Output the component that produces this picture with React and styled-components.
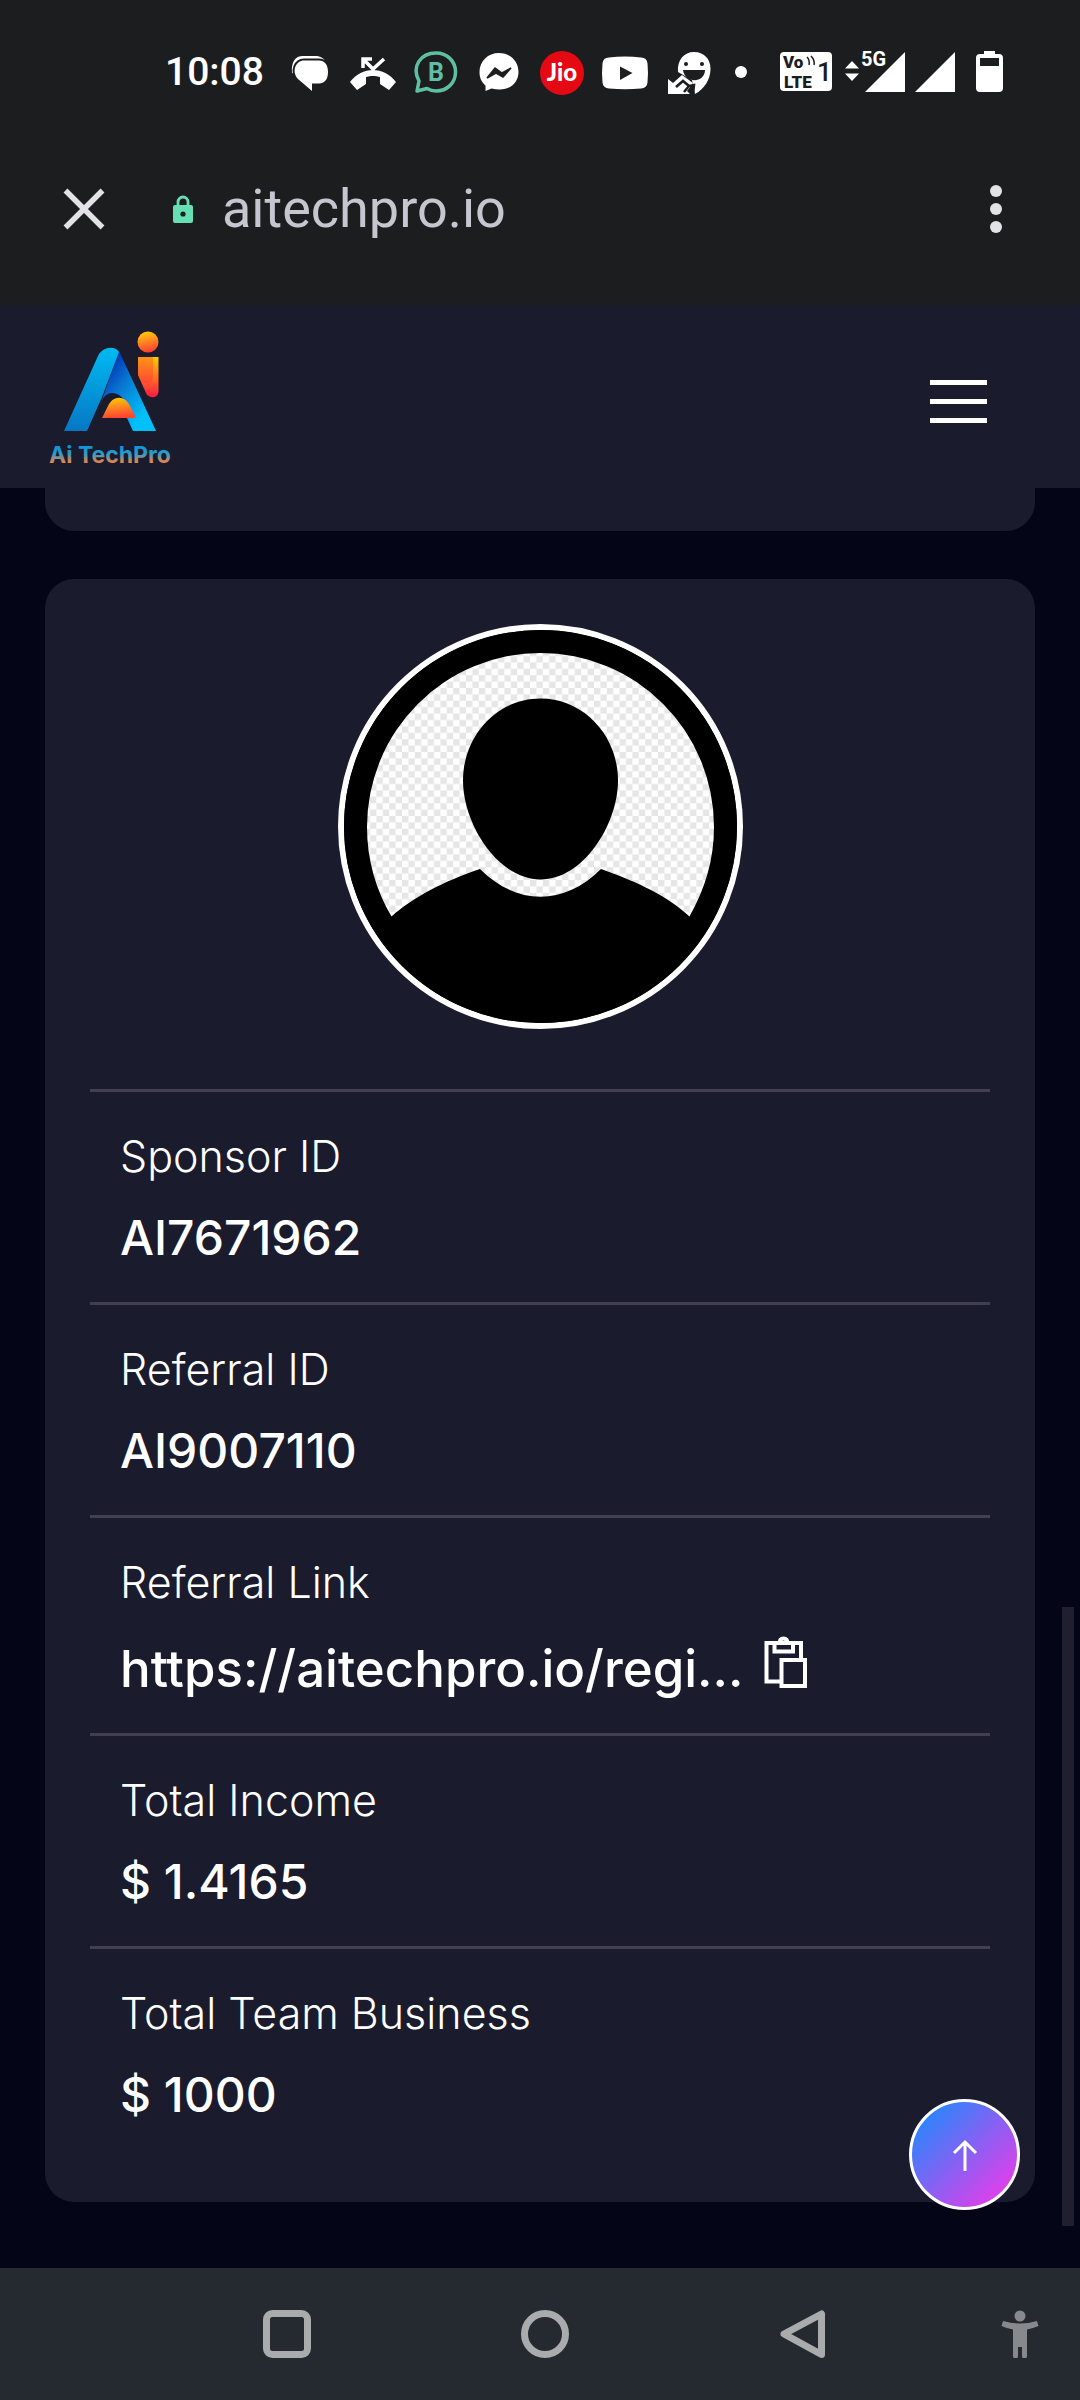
import React from "react";
import styled, { createGlobalStyle } from "styled-components";

const GlobalStyle = createGlobalStyle`
  *, *::before, *::after { box-sizing: border-box; }
  body {
    margin: 0;
    background: #040517;
    color: #fff;
    font-family: Inter, "Open Sans", sans-serif;
  }
  button { padding: 0; border: 0; background: none; color: inherit; cursor: pointer; }
  svg { display: block; flex: none; }
  dl, dt, dd { margin: 0; }
`;

const Screen = styled.div`
  display: flex;
  flex-direction: column;
  min-height: 100vh;
`;

const StatusBar = styled.div`
  display: flex;
  align-items: center;
  justify-content: space-between;
  height: 144px;
  padding: 0 77px 0 165px;
  background: #1c1d1f;
  font-family: Roboto, sans-serif;
`;

const StatusGroup = styled.div`
  display: flex;
  align-items: center;
  gap: ${(p) => p.$gap}px;
`;

const Clock = styled.time`
  width: 106px;
  font-size: 39px;
  font-weight: 500;
  line-height: 48px;
`;

const BrowserBar = styled.div`
  display: flex;
  align-items: center;
  height: 161px;
  padding: 0 72px 31px 57px;
  background: #1c1d1f;
  font-family: Roboto, sans-serif;
`;

const IconButton = styled.button`
  display: flex;
  align-items: center;
  justify-content: center;
  width: ${(p) => p.$width}px;
  height: 54px;
`;

const Address = styled.div`
  display: flex;
  flex: 1;
  align-items: center;
  gap: 28px;
  margin-left: 61px;
  color: #c4c6d0;
  font-size: 54px;
  line-height: 64px;
`;

const SiteHeader = styled.header`
  display: flex;
  align-items: center;
  justify-content: space-between;
  height: 183px;
  padding: 0 93px 0 48px;
  background: #1a1b2d;
`;

const MenuButton = styled.button`
  display: flex;
  flex-direction: column;
  gap: 14px;
  width: 57px;
  margin-top: 10px;
`;

const MenuBar = styled.span`
  width: 100%;
  height: 5px;
  background: #fff;
`;

const Main = styled.main`
  position: relative;
  flex: 1;
  display: flex;
  flex-direction: column;
  gap: 48px;
  padding: 0 45px 66px;
`;

const PreviousCard = styled.section`
  height: 43px;
  border-radius: 0 0 29px 29px;
  background: #1a1b2d;
`;

const ProfileCard = styled.section`
  display: flex;
  flex-direction: column;
  gap: 60px;
  padding: 45px 45px 43px;
  border-radius: 29px;
  background: #1a1b2d;
`;

const Avatar = styled.div`
  align-self: center;
  width: 405px;
  height: 405px;
  border: 6px solid #fff;
  border-radius: 50%;
  background: #000;
  overflow: hidden;
`;

const Details = styled.dl`
  display: flex;
  flex-direction: column;
`;

const DetailRow = styled.div`
  display: flex;
  flex-direction: column;
  gap: 14px;
  padding: 32px 30px 28px;
  border-top: 3px solid #413f50;
`;

const DetailLabel = styled.dt`
  font-size: 43px;
  font-weight: 300;
  line-height: 64px;
`;

const DetailValue = styled.dd`
  display: flex;
  align-items: flex-end;
  gap: 20px;
  font-size: ${(p) => (p.$link ? 51 : 48)}px;
  font-weight: 500;
  line-height: 72px;
`;

const CopyButton = styled.button`
  display: flex;
  align-items: center;
  height: 77px;
  padding-bottom: 7px;
`;

const TopButton = styled.button`
  position: absolute;
  right: 60px;
  bottom: 58px;
  display: flex;
  align-items: center;
  justify-content: center;
  width: 111px;
  height: 111px;
  border: 3px solid #fff;
  border-radius: 50%;
  background: linear-gradient(135deg, #0d90ff 0%, #ff33e7 100%);
`;

const ScrollThumb = styled.div`
  position: absolute;
  right: 6px;
  bottom: 42px;
  width: 12px;
  height: 619px;
  background: #1f1f30;
`;

const SystemNav = styled.nav`
  display: grid;
  grid-template-columns: 158fr 258fr 258fr 258fr 148fr;
  align-items: center;
  height: 132px;
  background: #252930;
`;

const NavButton = styled.button`
  display: flex;
  grid-column: ${(p) => p.$column};
  justify-content: ${(p) => (p.$end ? "flex-end" : "center")};
  padding-right: ${(p) => (p.$end ? 36 : 0)}px;
`;

const statusIcons = [
  <svg key="messages" width="48" height="48" viewBox="0 0 48 48" fill="#fff">
    <path d="M6 25C5 14 9 8 17 8h12c5 0 8 1.500 10 5L12 27z" />
    <path d="M18 12.500h15c5.500 0 9 4 9 11.500s-3.500 11.500-9 11.500h-7V43L12 31C5 23 10 12.500 18 12.500z" stroke="#1c1d1f" strokeWidth="4" paintOrder="stroke" />
  </svg>,
  <svg key="missed" width="48" height="48" viewBox="0 0 48 48">
    <path d="M1 34c12-16 34-16 46 0l-7 8-9-6v-7c-4-1.500-10-1.500-14 0v7l-9 6z" fill="#fff" />
    <path d="M14 20V11h9M15 12l9 9 11-10" fill="none" stroke="#fff" strokeWidth="3.500" />
  </svg>,
  <svg key="business" width="48" height="48" viewBox="0 0 48 48">
    <path d="M5 43l2-10C-1 18 9 5 24 5c11 0 19.500 8 19.500 19S35 43 24 43c-3 0-6-.8-9-2.500z" fill="none" stroke="#5fbfa3" strokeWidth="3.500" strokeLinejoin="round" />
    <text x="24" y="33" textAnchor="middle" fontFamily="Roboto" fontWeight="700" fontSize="25" fill="#5fbfa3">B</text>
  </svg>,
  <svg key="messenger" width="48" height="48" viewBox="0 0 48 48">
    <path d="M24 5C13 5 4.500 13 4.500 24c0 6 2 10 6 13.500V43l6-2.500C34 45 43.500 35 43.500 24S35 5 24 5z" fill="#fff" />
    <path d="M12 30l8-10 7 5 9-5-8 9-7-4z" fill="#1c1d1f" stroke="#1c1d1f" strokeWidth="1.500" />
  </svg>,
  <svg key="jio" width="48" height="48" viewBox="0 0 48 48">
    <circle cx="24" cy="25" r="22" fill="#e50914" />
    <text x="24" y="33" textAnchor="middle" fontFamily="Lato" fontWeight="900" fontSize="24" fill="#fff">Jio</text>
  </svg>,
  <svg key="video" width="48" height="48" viewBox="0 0 48 48">
    <path d="M8 9.500q16-2 32 0 6 0 6.500 6 1 9.500 0 19-.5 5.500-6.500 6-16 1.500-32 0-6-.5-6.500-6-1-9.500 0-19 .5-6 6.500-6z" fill="#fff" />
    <path d="M19 18.500v13.500l12.500-7z" fill="#1c1d1f" />
  </svg>,
  <svg key="face" width="48" height="48" viewBox="0 0 48 48">
    <path d="M30 4c10 0 16.500 7 16.500 16.500C46.500 32 40 41 31 46l-3-14-14-8c-1-12 6-20 16-20z" fill="#fff" />
    <circle cx="22" cy="16" r="2" fill="#1c1d1f" />
    <circle cx="38" cy="16" r="2" fill="#1c1d1f" />
    <path d="M19 22h22c0 13-20 14-22 0z" fill="#1c1d1f" />
    <path d="M4 31l5 4 9-8 11 8-6 8 3 3H4z" fill="#fff" />
    <path d="M12 39l7-6 6 5-5 6M25 38l5-1-1 9" fill="none" stroke="#1c1d1f" strokeWidth="2.500" />
  </svg>,
  <svg key="dot" width="28" height="48" viewBox="0 0 28 48">
    <circle cx="14" cy="24" r="6" fill="#fff" />
  </svg>,
];

function Volte() {
  return (
    <svg width="52" height="44" viewBox="0 -2 52 44">
      <rect width="52" height="39" rx="4" fill="#fff" />
      <g fill="#1c1d1f" fontFamily="Roboto" fontWeight="900">
        <text x="3" y="16" fontSize="17">Vo</text>
        <text x="4" y="36" fontSize="17">LTE</text>
        <text x="37" y="29" fontSize="26" fontWeight="500">1</text>
      </g>
      <path d="M27 5q3 3 2 8M31 4q4 4 3 9" fill="none" stroke="#1c1d1f" strokeWidth="1.500" />
    </svg>
  );
}

function MobileData() {
  return (
    <svg width="60" height="54" viewBox="0 -6 60 54" fill="#fff">
      <path d="M0 17.500l7-7.500 7 7.500zM0 22.500l7 7.500 7-7.500zM20 41L60 1v40z" />
      <text x="16" y="15" fontFamily="Roboto" fontWeight="700" fontSize="20">5G</text>
    </svg>
  );
}

function Signal() {
  return (
    <svg width="40" height="42" viewBox="0 0 40 42">
      <path d="M0 41L40 1v40z" fill="#fff" />
    </svg>
  );
}

function Battery() {
  return (
    <svg width="27" height="42" viewBox="0 0 27 42">
      <path d="M8 0h11v3h4q4 0 4 4v30q0 4-4 4H4q-4 0-4-4V7q0-4 4-4h4z" fill="#fff" />
      <path d="M4 7h19v8H4z" fill="#1c1d1f" />
    </svg>
  );
}

function Logo() {
  return (
    <svg width="126" height="146" viewBox="48 23 126 146" role="img" aria-label="Ai TechPro">
      <defs>
        <linearGradient id="legLeft" x1="0" y1="0" x2="0" y2="1">
          <stop offset="0" stopColor="#00baf2" />
          <stop offset="1" stopColor="#0677c4" />
        </linearGradient>
        <linearGradient id="legRight" x1=".1" y1=".15" x2=".7" y2=".85">
          <stop offset="0" stopColor="#0030b4" />
          <stop offset=".4" stopColor="#0874d0" />
          <stop offset="1" stopColor="#00c0fa" />
        </linearGradient>
        <linearGradient id="warm" x1="0" y1="0" x2=".2" y2="1">
          <stop offset="0" stopColor="#ffd500" />
          <stop offset=".5" stopColor="#ff8b1f" />
          <stop offset="1" stopColor="#ff4630" />
        </linearGradient>
        <linearGradient id="stem" x1="0" y1="0" x2="0" y2="1">
          <stop offset="0" stopColor="#ffce00" />
          <stop offset="1" stopColor="#ff1744" />
        </linearGradient>
        <linearGradient id="word" x1="0" y1="0" x2="0" y2="1">
          <stop offset=".2" stopColor="#0c96dc" />
          <stop offset=".45" stopColor="#2a9ccb" />
          <stop offset=".75" stopColor="#e9824b" />
        </linearGradient>
      </defs>
      <path d="M119 50l37 80h-23l-6-13 8-1c-8-14-13-24-23-24q-6 0-10 7z" fill="url(#legRight)" />
      <path d="M64 130l34-75c4-9 17-11 21-4l-17 45-15 34z" fill="url(#legLeft)" />
      <path d="M102 117l6-12c5-11 17-11 22 0l6 12z" fill="url(#warm)" />
      <circle cx="148" cy="41" r="10.500" fill="url(#warm)" />
      <path d="M138 56h20.500v34c0 7-9 9-12.500 2l-8-18z" fill="url(#stem)" />
      <path d="M138 56h15v19c0 7-7 9-11 6l-4-7z" fill="#ff2b3d" opacity=".35" />
      <text x="49" y="162" fontFamily="Inter, sans-serif" fontWeight="700" fontSize="23" fill="url(#word)">Ai TechPro</text>
    </svg>
  );
}

function Portrait() {
  return (
    <svg width="393" height="393" viewBox="6 6 393 393" role="img" aria-label="Profile">
      <defs>
        <pattern id="checks" width="12.800" height="12.800" patternUnits="userSpaceOnUse">
          <rect width="12.800" height="12.800" fill="#fff" />
          <path d="M0 0h6.400v6.400H0zM6.400 6.400h6.400v6.400H6.400z" fill="#e6e6e6" />
        </pattern>
      </defs>
      <rect x="6" y="6" width="393" height="393" fill="#000" />
      <path d="M53.500 292.500C38 266 29 236 29 203a173.500 174 0 0 1 347 0c0 33-9 62-24.500 89.500C331 273 300 258 263 245c-37 37-84 37-121 0-36 12-68 29-88.500 47.500z" fill="url(#checks)" />
      <path d="M202.500 74.500c43 0 77.500 37 77.500 82 0 44-35 99-77.500 99S125 200.500 125 156.500c0-45 34.500-82 77.500-82z" fill="#000" />
    </svg>
  );
}

function Clipboard() {
  return (
    <svg width="46" height="54" viewBox="0 0 46 54" fill="none" stroke="#fff" strokeWidth="4">
      <path d="M18 45.500H3.500V7H38v17" />
      <path d="M11.500 7v8.500H30V7" />
      <path d="M16.500 7.500q0-5 4-5t4 5" />
      <rect x="18.500" y="24" width="23.500" height="26" />
    </svg>
  );
}

const details = [
  { label: "Sponsor ID", value: "AI7671962" },
  { label: "Referral ID", value: "AI9007110" },
  { label: "Referral Link", value: "https://aitechpro.io/regi...", copy: true },
  { label: "Total Income", value: "$ 1.4165" },
  { label: "Total Team Business", value: "$ 1000" },
];

export default function App() {
  return (
    <Screen>
      <GlobalStyle />
      <StatusBar>
        <StatusGroup $gap={15}>
          <Clock>10:08</Clock>
          {statusIcons}
        </StatusGroup>
        <StatusGroup $gap={10}>
          <StatusGroup $gap={13}>
            <Volte />
            <MobileData />
          </StatusGroup>
          <StatusGroup $gap={21}>
            <Signal />
            <Battery />
          </StatusGroup>
        </StatusGroup>
      </StatusBar>
      <BrowserBar>
        <IconButton $width={54} aria-label="Close">
          <svg width="42" height="42" viewBox="0 0 42 42" stroke="#e3e2e6" strokeWidth="5.500">
            <path d="M2.500 2.500l37 37M39.500 2.500l-37 37" />
          </svg>
        </IconButton>
        <Address>
          <svg width="22" height="30" viewBox="0 0 22 30">
            <path d="M6 12V8a5 5 0 0 1 10 0v4" fill="none" stroke="#66dfb3" strokeWidth="2.800" />
            <rect x="1" y="11" width="20" height="18" rx="2" fill="#66dfb3" />
            <circle cx="11" cy="20" r="2.600" fill="#1c1d1f" />
          </svg>
          <span>aitechpro.io</span>
        </Address>
        <IconButton $width={24} aria-label="More options">
          <svg width="12" height="48" viewBox="0 0 12 48" fill="#e3e2e6">
            <circle cx="6" cy="6" r="6" />
            <circle cx="6" cy="24" r="6" />
            <circle cx="6" cy="42" r="6" />
          </svg>
        </IconButton>
      </BrowserBar>
      <SiteHeader>
        <Logo />
        <MenuButton aria-label="Open menu">
          <MenuBar />
          <MenuBar />
          <MenuBar />
        </MenuButton>
      </SiteHeader>
      <Main>
        <PreviousCard />
        <ProfileCard>
          <Avatar>
            <Portrait />
          </Avatar>
          <Details>
            {details.map(({ label, value, copy }) => (
              <DetailRow key={label}>
                <DetailLabel>{label}</DetailLabel>
                <DetailValue $link={copy}>
                  <span>{value}</span>
                  {copy && (
                    <CopyButton aria-label="Copy referral link">
                      <Clipboard />
                    </CopyButton>
                  )}
                </DetailValue>
              </DetailRow>
            ))}
          </Details>
        </ProfileCard>
        <ScrollThumb />
        <TopButton aria-label="Back to top">
          <svg width="26" height="34" viewBox="0 0 26 34" fill="none" stroke="#fff" strokeWidth="3">
            <path d="M13 33V4M2 15L13 4l11 11" />
          </svg>
        </TopButton>
      </Main>
      <SystemNav>
        <NavButton $column={2} aria-label="Recent apps">
          <svg width="48" height="48" viewBox="0 0 48 48" fill="none" stroke="#aaabad" strokeWidth="7">
            <rect x="3.500" y="3.500" width="41" height="41" rx="6" />
          </svg>
        </NavButton>
        <NavButton $column={3} aria-label="Home">
          <svg width="48" height="48" viewBox="0 0 48 48" fill="none" stroke="#aaabad" strokeWidth="7">
            <circle cx="24" cy="24" r="20.500" />
          </svg>
        </NavButton>
        <NavButton $column={4} aria-label="Back">
          <svg width="48" height="48" viewBox="0 0 48 48" fill="none" stroke="#aaabad" strokeWidth="7" strokeLinejoin="round">
            <path d="M42.500 4v40.500L5 24z" />
          </svg>
        </NavButton>
        <NavButton $column={5} $end aria-label="Accessibility">
          <svg width="48" height="48" viewBox="0 0 48 48" fill="#87898c">
            <circle cx="24" cy="6" r="5.500" />
            <path d="M7 11q17 5 34 0l1.500 5q-6 2.500-11.500 3.500V46a2.500 2.500 0 0 1-5 0V37h-4v9a2.500 2.500 0 0 1-5 0V19.500q-6-1-11.500-3.500z" />
          </svg>
        </NavButton>
      </SystemNav>
    </Screen>
  );
}
